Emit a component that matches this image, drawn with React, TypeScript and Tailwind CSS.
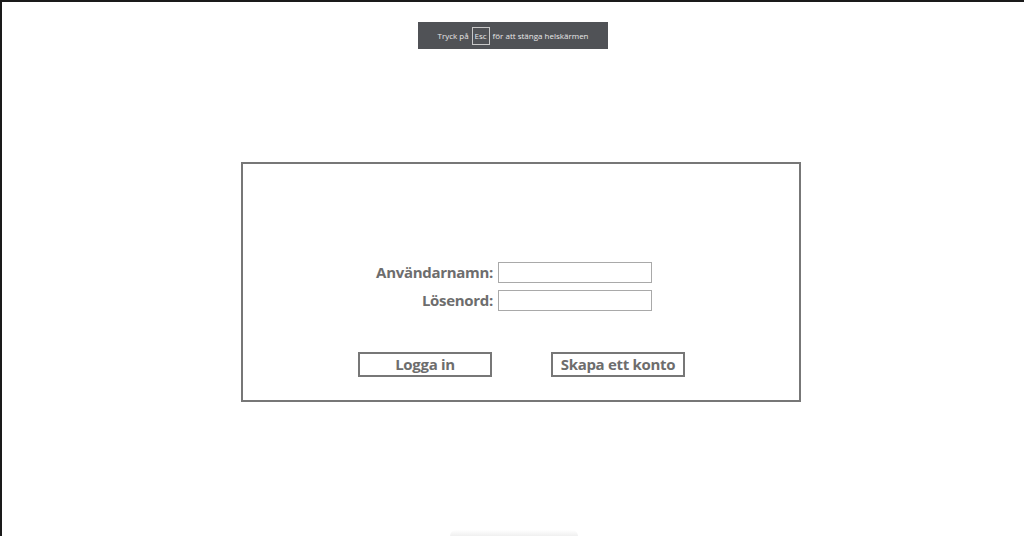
import React from 'react';

const Field: React.FC<{ label: string; type?: string }> = ({ label, type = 'text' }) => (
  <div className="flex items-center">
    <label className="w-[255px] pr-[5px] text-right text-[15px] font-bold leading-none tracking-[-0.3px] text-[#6d6d6d]">
      {label}
    </label>
    <input
      type={type}
      className="h-[21px] w-[154px] border border-[#a9a9a9] bg-white outline-none"
    />
  </div>
);

export default function App() {
  return (
    <div
      className="relative h-[536px] w-[1024px] overflow-hidden border-l-2 border-t-2 border-[#1a1a1a] bg-white"
      style={{ fontFamily: '"Open Sans", "Noto Sans", sans-serif' }}
    >
      {/* Fullscreen hint */}
      <div className="absolute left-[416px] top-[20px] flex h-[27px] w-[190px] items-center justify-center gap-[3px] bg-[#505256] text-[8px] text-[#e8e8e8]">
        <span>Tryck på</span>
        <span className="flex h-[18px] w-[18px] items-center justify-center border border-[#c8c8c8] text-[8px]">
          Esc
        </span>
        <span>för att stänga helskärmen</span>
      </div>

      <div className="ml-[239px] mt-[160px] h-[240px] w-[560px] border-2 border-[#777777] pt-[98px]">
        <div className="flex flex-col gap-[7px]">
          <Field label="Användarnamn:" />
          <Field label="Lösenord:" type="password" />
        </div>
        <div className="mt-[41px] flex gap-[59px] pl-[115px]">
          <button className="h-[25px] w-[134px] border-2 border-[#777777] text-[15px] font-bold leading-none tracking-[-0.3px] text-[#6d6d6d]">
            Logga in
          </button>
          <button className="h-[25px] w-[134px] border-2 border-[#777777] text-[15px] font-bold leading-none tracking-[-0.3px] text-[#6d6d6d]">
            Skapa ett konto
          </button>
        </div>
      </div>

      <div className="absolute bottom-0 left-[448px] h-[6px] w-[128px] rounded-t-full bg-gradient-to-b from-transparent to-[#f0f0f0]" />
    </div>
  );
}
